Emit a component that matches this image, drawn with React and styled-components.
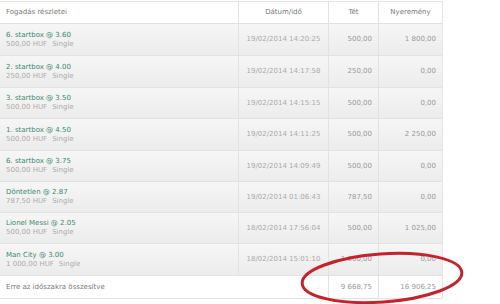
import React from "react";
import styled, { createGlobalStyle } from "styled-components";

const Global = createGlobalStyle`
  html, body { margin: 0; padding: 0; background: #fff; }
  body { font-family: "DejaVu Sans", Verdana, sans-serif; }
`;

const Page = styled.div`
  position: relative;
  width: 500px;
  height: 304px;
  overflow: hidden;
  padding-top: 1px;
  box-sizing: border-box;
`;

const Table = styled.div`
  width: 443px;
  border-top: 1px solid #e4e4e4;
  border-right: 1px solid #e4e4e4;
  box-sizing: border-box;
`;

const Row = styled.div`
  display: grid;
  grid-template-columns: 238px 90px 50px 64px;
  height: ${(p) => p.$h}px;
  box-sizing: border-box;
  border-bottom: 1px solid #e2e2e2;
  background: ${(p) =>
    p.$plain ? "#fff" : "linear-gradient(#f6f6f6, #ececec)"};
`;

const Cell = styled.div`
  display: flex;
  flex-direction: column;
  justify-content: center;
  box-sizing: border-box;
  font-size: 7px;
  line-height: 9px;
  white-space: nowrap;
  padding: 0 6px;
  color: ${(p) => p.$color || "#999"};
  align-items: ${(p) =>
    p.$align === "right" ? "flex-end" : p.$align === "center" ? "center" : "flex-start"};
  border-left: ${(p) => (p.$first ? "none" : "1px solid #e2e2e2")};
  grid-column: ${(p) => p.$span || "auto"};
`;

const Link = styled.span`
  color: #3a8a6c;
`;

const Sub = styled.span`
  color: #acacac;
`;

const Single = styled.span`
  margin-left: 5px;
`;

const Ellipse = styled.svg`
  position: absolute;
  left: 290px;
  top: 240px;
  pointer-events: none;
`;

const rows = [
  ["6. startbox @ 3.60", "500,00", "19/02/2014 14:20:25", "500,00", "1 800,00", 32],
  ["2. startbox @ 4.00", "250,00", "19/02/2014 14:17:58", "250,00", "0,00", 32],
  ["3. startbox @ 3.50", "500,00", "19/02/2014 14:15:15", "500,00", "0,00", 31],
  ["1. startbox @ 4.50", "500,00", "19/02/2014 14:11:25", "500,00", "2 250,00", 32],
  ["6. startbox @ 3.75", "500,00", "19/02/2014 14:09:49", "500,00", "0,00", 31],
  ["Döntetlen @ 2.87", "787,50", "19/02/2014 01:06:43", "787,50", "0,00", 31],
  ["Lionel Messi @ 2.05", "500,00", "18/02/2014 17:56:04", "500,00", "1 025,00", 31],
  ["Man City @ 3.00", "1 000,00", "18/02/2014 15:01:10", "1 000,00", "0,00", 32],
];

export default function App() {
  return (
    <Page>
      <Global />
      <Table>
        <Row $plain $h={22}>
          <Cell $first $color="#777">Fogadás részletei</Cell>
          <Cell $align="center" $color="#777">Dátum/idő</Cell>
          <Cell $align="center" $color="#777">Tét</Cell>
          <Cell $align="center" $color="#777">Nyeremény</Cell>
        </Row>
        {rows.map(([title, stake, date, bet, win, h]) => (
          <Row key={date} $h={h}>
            <Cell $first>
              <Link>{title}</Link>
              <Sub>
                {stake} HUF<Single>Single</Single>
              </Sub>
            </Cell>
            <Cell $align="center" $color="#aaa">{date}</Cell>
            <Cell $align="right">{bet}</Cell>
            <Cell $align="right">{win}</Cell>
          </Row>
        ))}
        <Row $plain $h={23}>
          <Cell $first $span="span 2" $color="#777">Erre az időszakra összesítve</Cell>
          <Cell $align="right">9 668,75</Cell>
          <Cell $align="right">16 906,25</Cell>
        </Row>
      </Table>
      <Ellipse width="190" height="70" viewBox="0 0 190 70">
        <ellipse
          cx="92"
          cy="38"
          rx="80"
          ry="24"
          fill="none"
          stroke="#c4232b"
          strokeWidth="3"
          transform="rotate(-4 92 38)"
        />
      </Ellipse>
    </Page>
  );
}
